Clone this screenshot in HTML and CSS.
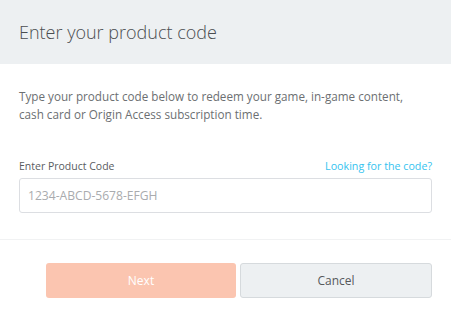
FILE: index.html
```html
<!DOCTYPE html>
<html lang="en">

<head>
    <meta charset="UTF-8">
    <meta name="viewport" content="width=device-width, initial-scale=1.0">
    <title>Redeem Product Code</title>
    <link rel="stylesheet" href="styles.css">
</head>

<body>
    <div class="dialog">
        <div class="dialog-header">
            <h1 class="dialog-title">Enter your product code</h1>
        </div>

        <div class="dialog-body">
            <p class="intro">Type your product code below to redeem your game, in-game content, cash card or Origin Access subscription time.</p>

            <div class="field-head">
                <label class="field-label" for="code">Enter Product Code</label>
                <a class="help-link" href="#">Looking for the code?</a>
            </div>
            <input class="code-input" id="code" type="text" placeholder="1234-ABCD-5678-EFGH">
        </div>

        <!-- footer buttons -->
        <div class="dialog-footer">
            <button class="btn btn-next" disabled>Next</button>
            <button class="btn btn-cancel">Cancel</button>
        </div>
    </div>
</body>

</html>
```

FILE: styles.css
```css
body {
    margin: 0;
    font-family: "Open Sans", "Liberation Sans", sans-serif;
    background: #fff;
}

.dialog {
    width: 451px;
}

.dialog-header {
    height: 64px;
    background-color: #edf0f2;
    display: flex;
    align-items: center;
    padding: 0 19px;
}

.dialog-title {
    margin: 0;
    font-size: 18px;
    font-weight: 300;
    color: #4a4d50;
}

.dialog-body {
    padding: 23px 19px 26px;
    border-bottom: 1px solid #f1f2f3;
}

.intro {
    max-width: 392px;
    margin: 0 0 36px;
    font-size: 11.7px;
    line-height: 18px;
    color: #6c6f72;
}

.field-head {
    display: flex;
    justify-content: space-between;
    align-items: baseline;
    margin-bottom: 5px;
}

.field-label {
    font-size: 10.5px;
    color: #595c5f;
}

.help-link {
    font-size: 10.7px;
    color: #35c3ef;
    text-decoration: none;
}

.code-input {
    display: block;
    box-sizing: border-box;
    width: 100%;
    height: 35px;
    padding: 0 8px;
    border: 1px solid #dcdee2;
    border-radius: 3px;
    font-family: inherit;
    font-size: 12.1px;
    color: #444;
}

.code-input::placeholder {
    color: #a9abae;
}

.dialog-footer {
    display: flex;
    gap: 4px;
    padding: 23px 19px 0 46px;
}

.btn {
    flex: 1;
    height: 35px;
    border-radius: 3px;
    font-family: inherit;
    font-size: 12px;
}

.btn-next {
    background-color: #fbc5b0;
    border: none;
    color: #fff;
}

.btn-cancel {
    background-color: #edf0f2;
    border: 1px solid #d6dadd;
    color: #55585b;
}
```
